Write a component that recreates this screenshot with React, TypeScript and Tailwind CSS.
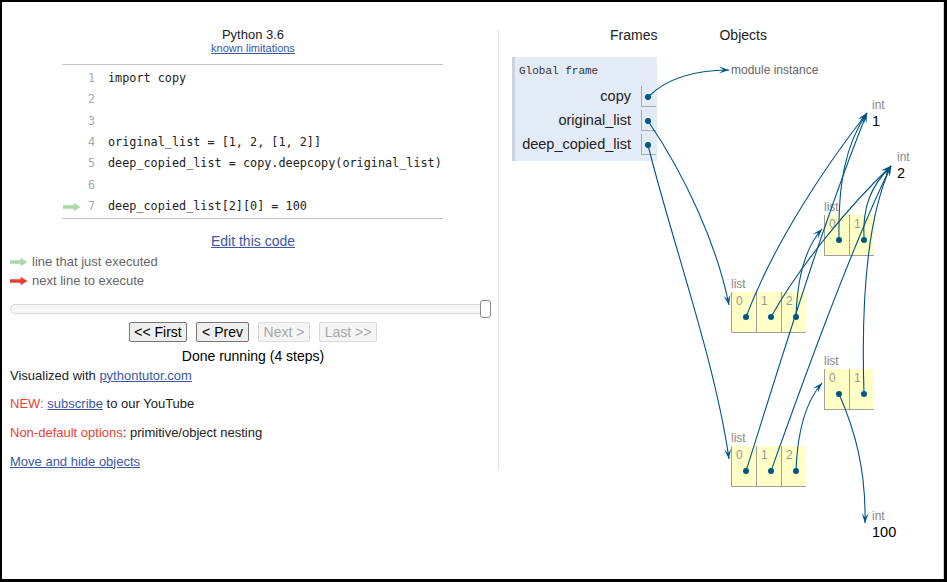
import React from 'react';

const CODE = [
  'import copy',
  '',
  '',
  'original_list = [1, 2, [1, 2]]',
  'deep_copied_list = copy.deepcopy(original_list)',
  '',
  'deep_copied_list[2][0] = 100',
];

// pointer arrows, page coordinates: start, control 1, control 2, end
const ARROWS: number[][] = [
  [648, 97, 665, 80, 690, 70, 729, 70],
  [648, 121, 685, 175, 717, 245, 729, 305],
  [648, 145, 670, 235, 715, 360, 729, 459],
  [746, 317, 775, 240, 830, 160, 867, 113],
  [771, 317, 800, 265, 850, 205, 891, 166],
  [796, 317, 797, 285, 803, 250, 822, 229],
  [839, 240, 838, 185, 845, 145, 867, 113],
  [864, 240, 862, 205, 872, 185, 891, 166],
  [746, 471, 775, 380, 820, 230, 867, 113],
  [771, 471, 800, 390, 850, 250, 891, 166],
  [796, 471, 797, 440, 803, 405, 822, 383],
  [839, 394, 855, 430, 866, 470, 865, 523],
  [864, 394, 861, 300, 868, 215, 891, 166],
];

const DOTS = [
  [648, 97], [648, 121], [648, 145],
  [746, 317], [771, 317], [796, 317],
  [839, 240], [864, 240],
  [839, 394], [864, 394],
  [746, 471], [771, 471], [796, 471],
];

const headPoints = (cx: number, cy: number, ex: number, ey: number) => {
  const len = Math.hypot(ex - cx, ey - cy);
  const ux = (ex - cx) / len;
  const uy = (ey - cy) / len;
  const nx = -uy;
  const ny = ux;
  const L = 10;
  const W = 7;
  const pts = [
    [ex, ey],
    [ex - ux * L + (nx * W) / 2, ey - uy * L + (ny * W) / 2],
    [ex - ux * L * 0.55, ey - uy * L * 0.55],
    [ex - ux * L - (nx * W) / 2, ey - uy * L - (ny * W) / 2],
  ];
  return pts.map((p) => p.join(',')).join(' ');
};

const LineArrow = ({ color }: { color: string }) => (
  <svg width="18" height="10" viewBox="0 0 18 10">
    <path d="M0 3.3 H10.5 V0.8 L17.5 5 L10.5 9.2 V6.7 H0 Z" fill={color} />
  </svg>
);

const ListBox = ({ cells, className }: { cells: number; className: string }) => (
  <div className={`absolute ${className}`}>
    <div className="h-[15px] text-[12px] leading-[15px] text-[#888]">list</div>
    <div className="flex">
      {Array.from({ length: cells }).map((_, i) => (
        <div key={i} className="w-[25px] h-[41px] bg-[#ffffc6] border-l border-b border-[#a0a0a0] pl-[4px] pt-[2px] text-[12px] leading-[14px] text-[#999]">
          {i}
        </div>
      ))}
    </div>
  </div>
);

const IntBox = ({ value, className }: { value: string; className: string }) => (
  <div className={`absolute flex flex-col ${className}`}>
    <div className="h-[14px] text-[12px] leading-[14px] text-[#888]">int</div>
    <div className="h-[18px] text-[14.5px] leading-[18px] text-black">{value}</div>
  </div>
);

const FrameRow = ({ name }: { name: string }) => (
  <div className="flex h-[21px] items-center justify-end pr-[1px]">
    <span className="text-[14.5px] text-[#222]">{name}</span>
    <div className="ml-[10px] w-[15px] h-[21px] border-l border-b border-[#aaa]" />
  </div>
);

const App: React.FC = () => {
  return (
    <div className="w-[947px] h-[582px] bg-white border-t-2 border-l-2 border-r-[3px] border-b-[3px] border-black overflow-hidden font-['Liberation_Sans',Arial,sans-serif]">
      <div className="flex h-full border-r border-[#d4d4d4]">
        {/* left: code + controls */}
        <div className="w-[496px] shrink-0">
          <div className="pl-[6px] flex flex-col items-center">
            <div className="mt-[26px] text-[13px] leading-[14px] text-[#222]">Python 3.6</div>
            <a className="text-[11px] leading-[13px] text-[#3d58a2] underline">known limitations</a>
          </div>

          <div className="ml-[60px] mt-[9px] w-[381px] border-t border-b border-[#c4c4c4] pt-[3.3px] font-['DejaVu_Sans_Mono',monospace] text-[11.8px]">
            {CODE.map((line, i) => (
              <div key={i} className="flex items-center h-[21.33px]">
                <div className="w-[25px] flex items-center pl-[1px]">
                  {i === 6 && <LineArrow color="#a9d8aa" />}
                </div>
                <div className="w-[8px] text-right text-[#aaa]">{i + 1}</div>
                <div className="pl-[13px] whitespace-pre text-[#222]">{line}</div>
              </div>
            ))}
          </div>

          <div className="pl-[6px] mt-[14px] flex justify-center">
            <a className="text-[14px] leading-[16px] text-[#3d58a2] underline">Edit this code</a>
          </div>

          <div className="ml-[8px] mt-[4px] text-[13px] text-[#666]">
            <div className="flex items-center h-[19px] gap-[4px]">
              <LineArrow color="#a9d8aa" />
              <span>line that just executed</span>
            </div>
            <div className="flex items-center h-[19px] gap-[4px]">
              <LineArrow color="#e93f34" />
              <span>next line to execute</span>
            </div>
          </div>

          <div className="relative ml-[8px] mt-[9px] w-[481px] h-[18px] flex items-center">
            <div className="w-full h-[10px] rounded-full border border-[#d8d8d8] bg-[#f6f6f6]" />
            <div className="absolute right-0 top-0 w-[11px] h-[18px] rounded-[3px] border border-[#8a8a8a] bg-white" />
          </div>

          <div className="pl-[6px] mt-[4px] flex justify-center gap-[9px] text-[14px]">
            <button className="w-[58px] h-[20px] border border-[#767676] rounded-[2px] bg-[#efefef] text-black leading-[18px]">&lt;&lt; First</button>
            <button className="w-[53px] h-[20px] border border-[#767676] rounded-[2px] bg-[#efefef] text-black leading-[18px]">&lt; Prev</button>
            <button className="w-[52px] h-[20px] border border-[#dcdcdc] rounded-[2px] bg-[#f5f5f5] text-[#a8a8a8] leading-[18px]">Next &gt;</button>
            <button className="w-[58px] h-[20px] border border-[#dcdcdc] rounded-[2px] bg-[#f5f5f5] text-[#a8a8a8] leading-[18px]">Last &gt;&gt;</button>
          </div>

          <div className="pl-[6px] mt-[6px] text-center text-[14px] leading-[16px] text-black">Done running (4 steps)</div>

          <div className="ml-[8px] text-[13px] leading-[16px] text-[#222]">
            <div className="mt-[4px]">
              Visualized with <a className="text-[#3d58a2] underline">pythontutor.com</a>
            </div>
            <div className="mt-[12px]">
              <span className="text-[#e93f34]">NEW:</span> <a className="text-[#3d58a2] underline">subscribe</a> to our YouTube
            </div>
            <div className="mt-[13px]">
              <span className="text-[#e93f34]">Non-default options</span>: primitive/object nesting
            </div>
            <div className="mt-[13px]">
              <a className="text-[#3d58a2] underline">Move and hide objects</a>
            </div>
          </div>
        </div>

        <div className="w-px self-start mt-[28px] h-[440px] bg-[#e2e2e2]" />

        {/* right: frames and objects canvas */}
        <div className="relative flex-1">
          <div className="flex pl-[111px] pt-[25px] gap-[62px] text-[14px] leading-[16px] text-[#222]">
            <span>Frames</span>
            <span>Objects</span>
          </div>

          <div className="absolute left-[13px] top-[55px] w-[145px] bg-[#e2ebf6] border-l-[3px] border-[#c9d4e0] pt-[6px] pb-[6px]">
            <div className="h-[16px] pl-[4px] text-[11px] leading-[16px] font-['Liberation_Mono',monospace] text-[#333]">Global frame</div>
            <div className="mt-[7px] flex flex-col gap-[3px]">
              <FrameRow name="copy" />
              <FrameRow name="original_list" />
              <FrameRow name="deep_copied_list" />
            </div>
          </div>

          <div className="absolute left-[232px] top-[60px] text-[12px] leading-[16px] text-[#666]">module instance</div>

          <IntBox value="1" className="left-[373px] top-[96px]" />
          <IntBox value="2" className="left-[398px] top-[148px]" />
          <IntBox value="100" className="left-[373px] top-[507px]" />

          <ListBox cells={2} className="left-[325px] top-[198px]" />
          <ListBox cells={3} className="left-[232px] top-[275px]" />
          <ListBox cells={2} className="left-[325px] top-[352px]" />
          <ListBox cells={3} className="left-[232px] top-[429px]" />

          <svg className="absolute left-0 top-0 pointer-events-none" width="444" height="577" viewBox="499 2 444 577">
            {ARROWS.map((a, i) => (
              <g key={i}>
                <path d={`M${a[0]},${a[1]} C${a[2]},${a[3]} ${a[4]},${a[5]} ${a[6]},${a[7]}`} fill="none" stroke="#005583" strokeWidth="1.1" />
                <polygon points={headPoints(a[4], a[5], a[6], a[7])} fill="#005583" />
              </g>
            ))}
            {DOTS.map((d, i) => (
              <circle key={i} cx={d[0]} cy={d[1]} r="3" fill="#005583" />
            ))}
          </svg>
        </div>
      </div>
    </div>
  );
};

export default App;
